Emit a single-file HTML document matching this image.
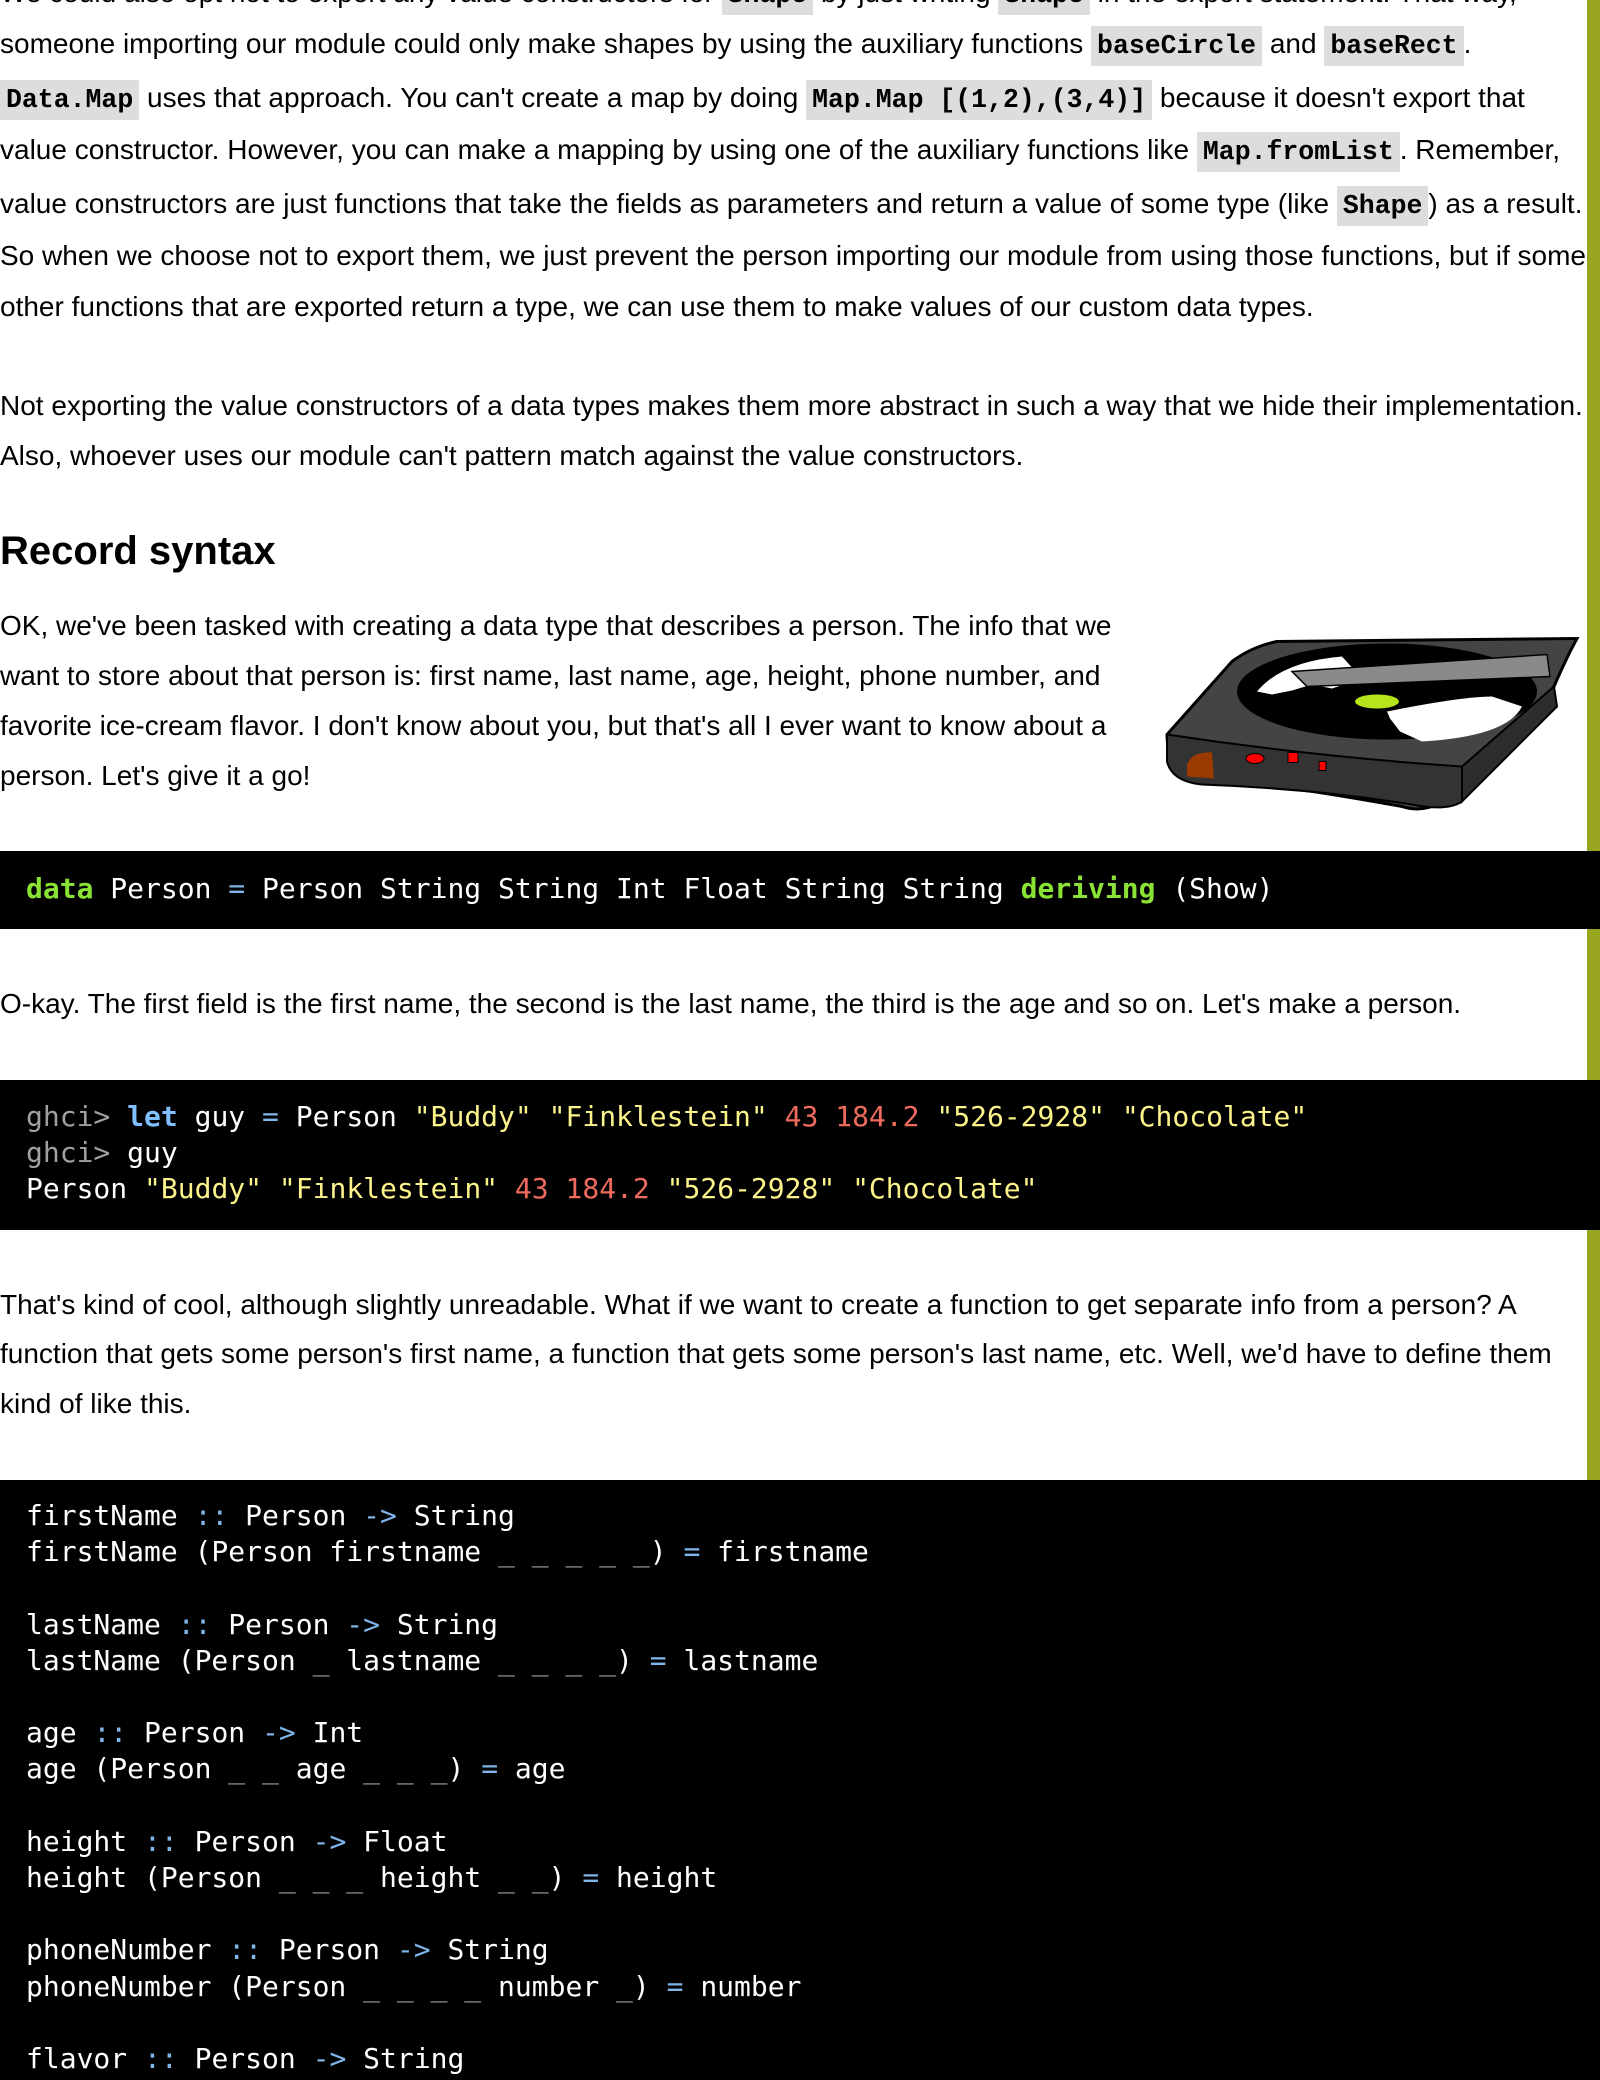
<!DOCTYPE html>
<html><head><meta charset="utf-8"><style>
html,body{margin:0;padding:0;background:#fff;}
body{width:1600px;height:2048px;position:relative;overflow:hidden;font-family:"Liberation Sans",Arial,sans-serif;font-size:28px;color:#000;}
.l{position:absolute;left:0;height:52px;line-height:52px;white-space:nowrap;}
code{font-family:"Liberation Mono",monospace;font-weight:bold;font-size:26.5px;background:#ddd;padding:5px 6px;}
.bar{position:absolute;left:1587px;top:0;width:13px;height:1480px;background:#98a71f;}
.cb{position:absolute;left:0;width:1600px;background:#000;color:#fff;font-family:"DejaVu Sans Mono",monospace;font-size:28px;}
.cb pre{margin:0;font:inherit;line-height:36.2px;padding-left:26px;white-space:pre;}
.k{color:#8ae234;font-weight:bold}
.b{color:#7fbfff;font-weight:bold}
.o{color:#7fb5e8}
.s{color:#fcf38a}
.n{color:#ef6b5e}
.g{color:#a0a0a0}
h2{position:absolute;left:0;top:526px;margin:0;font-size:40px;line-height:50px;font-weight:bold;}
</style></head><body>
<div class="bar"></div>
<div class="l" style="top:-33px">We could also opt not to export any value constructors for <code>Shape</code> by just writing <code>Shape</code> in the export statement. That way,</div>
<div class="l" style="top:18px">someone importing our module could only make shapes by using the auxiliary functions <code>baseCircle</code> and <code>baseRect</code>.</div>
<div class="l" style="top:72px"><code>Data.Map</code> uses that approach. You can't create a map by doing <code>Map.Map [(1,2),(3,4)]</code> because it doesn't export that</div>
<div class="l" style="top:124px">value constructor. However, you can make a mapping by using one of the auxiliary functions like <code>Map.fromList</code>. Remember,</div>
<div class="l" style="top:178px">value constructors are just functions that take the fields as parameters and return a value of some type (like <code>Shape</code>) as a result.</div>
<div class="l" style="top:230px">So when we choose not to export them, we just prevent the person importing our module from using those functions, but if some</div>
<div class="l" style="top:281px">other functions that are exported return a type, we can use them to make values of our custom data types.</div>
<div class="l" style="top:380px">Not exporting the value constructors of a data types makes them more abstract in such a way that we hide their implementation.</div>
<div class="l" style="top:430px">Also, whoever uses our module can't pattern match against the value constructors.</div>
<h2>Record syntax</h2>
<div class="l" style="top:600px">OK, we've been tasked with creating a data type that describes a person. The info that we</div>
<div class="l" style="top:650px">want to store about that person is: first name, last name, age, height, phone number, and</div>
<div class="l" style="top:700px">favorite ice-cream flavor. I don't know about you, but that's all I ever want to know about a</div>
<div class="l" style="top:750px">person. Let's give it a go!</div>
<svg style="position:absolute;left:1162px;top:614px" width="420" height="205" viewBox="0 0 420 200">
<path d="M5 118 L70 45 Q90 30 115 25 L415 22 Q405 40 392 70 L300 170 Q270 200 240 190 Q120 168 30 160 Q5 150 5 118 Z" fill="#444" stroke="#000" stroke-width="3"/>
<path d="M5 118 L5 145 Q10 165 40 168 Q150 172 250 188 Q285 195 300 185 L300 150 Q150 140 5 118 Z" fill="#333" stroke="#000" stroke-width="2"/>
<path d="M300 150 L392 70 L395 90 L300 185Z" fill="#2d2d2d" stroke="#000" stroke-width="2"/>
<ellipse cx="225" cy="75" rx="150" ry="48" fill="#000"/>
<path d="M95 75 Q120 45 180 40 L200 62 L170 72 L150 68 L130 74 L110 78Z" fill="#fff"/>
<path d="M225 95 Q300 80 330 80 L360 90 Q345 120 260 125 L238 115 L228 102Z" fill="#fff"/>
<path d="M130 55 L385 38 L388 60 L145 70Z" fill="#8a8a8a" stroke="#000" stroke-width="1.5"/>
<ellipse cx="215" cy="85" rx="22" ry="7" fill="#b5e61d"/>
<path d="M25 148 Q30 135 50 136 L52 162 L25 160Z" fill="#9a3a00"/>
<ellipse cx="93" cy="142" rx="9" ry="5" fill="#f00" stroke="#000"/>
<rect x="126" y="136" width="10" height="10" fill="#f00" stroke="#000"/>
<rect x="157" y="145" width="7" height="9" fill="#f00" stroke="#000"/>
</svg>
<div class="cb" style="top:851px;height:78px"><pre style="padding-top:20px"><span class="k">data</span> Person <span class="o">=</span> Person String String Int Float String String <span class="k">deriving</span> (Show)</pre></div>
<div class="l" style="top:978px">O-kay. The first field is the first name, the second is the last name, the third is the age and so on. Let's make a person.</div>
<div class="cb" style="top:1080px;height:150px"><pre style="padding-top:19px"><span class="g">ghci&gt;</span> <span class="b">let</span> guy <span class="o">=</span> Person <span class="s">"Buddy"</span> <span class="s">"Finklestein"</span> <span class="n">43</span> <span class="n">184.2</span> <span class="s">"526-2928"</span> <span class="s">"Chocolate"</span>
<span class="g">ghci&gt;</span> guy
Person <span class="s">"Buddy"</span> <span class="s">"Finklestein"</span> <span class="n">43</span> <span class="n">184.2</span> <span class="s">"526-2928"</span> <span class="s">"Chocolate"</span></pre></div>
<div class="l" style="top:1279px">That's kind of cool, although slightly unreadable. What if we want to create a function to get separate info from a person? A</div>
<div class="l" style="top:1328px">function that gets some person's first name, a function that gets some person's last name, etc. Well, we'd have to define them</div>
<div class="l" style="top:1378px">kind of like this.</div>
<div class="cb" style="top:1480px;height:600px"><pre style="padding-top:18px">firstName <span class="o">::</span> Person <span class="o">-&gt;</span> String
firstName (Person firstname <span class="g">_ _ _ _ _</span>) <span class="o">=</span> firstname

lastName <span class="o">::</span> Person <span class="o">-&gt;</span> String
lastName (Person <span class="g">_</span> lastname <span class="g">_ _ _ _</span>) <span class="o">=</span> lastname

age <span class="o">::</span> Person <span class="o">-&gt;</span> Int
age (Person <span class="g">_ _</span> age <span class="g">_ _ _</span>) <span class="o">=</span> age

height <span class="o">::</span> Person <span class="o">-&gt;</span> Float
height (Person <span class="g">_ _ _</span> height <span class="g">_ _</span>) <span class="o">=</span> height

phoneNumber <span class="o">::</span> Person <span class="o">-&gt;</span> String
phoneNumber (Person <span class="g">_ _ _ _</span> number <span class="g">_</span>) <span class="o">=</span> number

flavor <span class="o">::</span> Person <span class="o">-&gt;</span> String</pre></div>
</body></html>
